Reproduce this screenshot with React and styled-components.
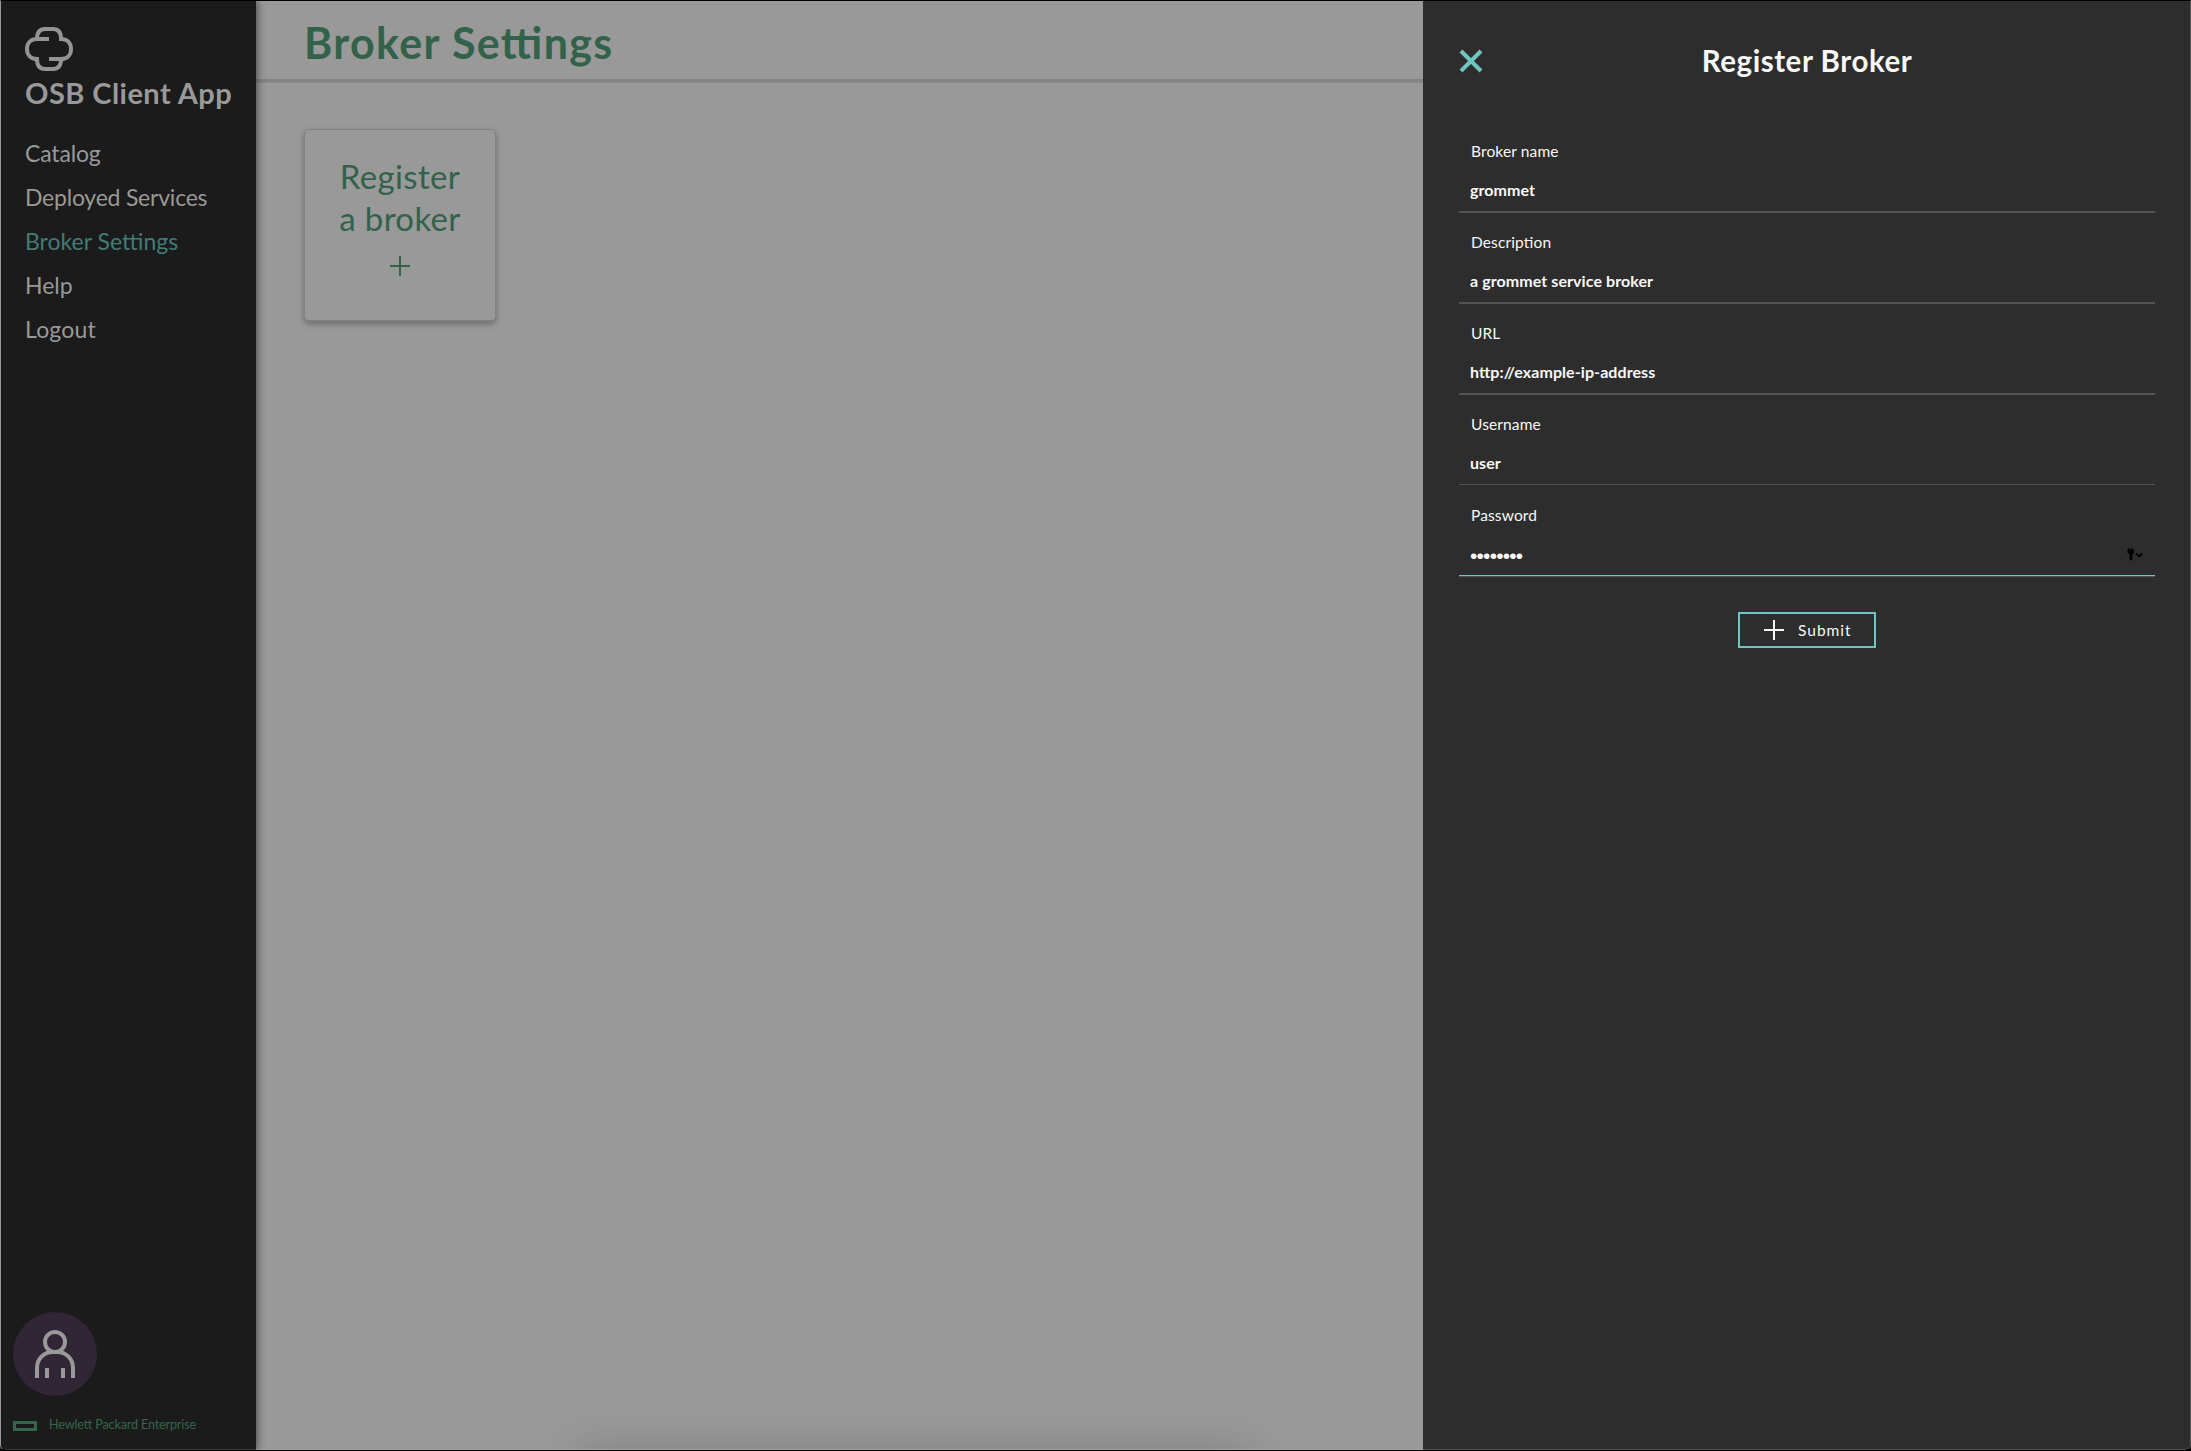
import React from "react";
import styled, { createGlobalStyle } from "styled-components";

const GlobalStyle = createGlobalStyle`
  *, *::before, *::after { box-sizing: border-box; }
  body {
    margin: 0;
    background: #000;
    font-family: Lato, "Liberation Sans", sans-serif;
    font-feature-settings: "liga" 1;
  }
`;

const Window = styled.div`
  display: flex;
  width: 2191px;
  height: 1451px;
  border-top: 1px solid #000;
  border-bottom: 1px solid #000;
  border-left: 1px solid #999;
  border-right: 1px solid #565656;
  border-radius: 0 0 6px 6px;
  background: #000;
  overflow: hidden;
`;

const Sidebar = styled.aside`
  display: flex;
  flex-direction: column;
  flex: 0 0 255px;
  padding-bottom: 13px;
  background: #1b1b1b;
  color: #999;
  box-shadow: 0 0 8px 1px rgba(0, 0, 0, 0.55);
  border-bottom: 1px solid #3c3c3c;
  border-bottom-left-radius: 5px;
  z-index: 1;
`;

const Brand = styled.div`
  display: flex;
  flex-direction: column;
  padding: 24px 0 0 24px;
`;

const BrandName = styled.div`
  font-size: 29px;
  font-weight: 700;
  line-height: 40px;
  letter-spacing: 0.45px;
  white-space: nowrap;
`;

const Nav = styled.nav`
  display: flex;
  flex-direction: column;
  flex: 1;
  padding: 18px 0 0 24px;
`;

const NavItem = styled.a`
  font-size: 23px;
  line-height: 44px;
  letter-spacing: ${(p) => p.$tracking || 0}px;
  color: ${(p) => (p.$active ? "#437b76" : "#999")};
`;

const SidebarFooter = styled.footer`
  display: flex;
  flex-direction: column;
  gap: 20px;
  padding-left: 12px;
`;

const Avatar = styled.div`
  display: flex;
  align-items: center;
  justify-content: center;
  width: 84px;
  height: 84px;
  border-radius: 50%;
  background: #312636;
`;

const Company = styled.div`
  display: flex;
  align-items: center;
  gap: 12px;
  height: 20px;
`;

const CompanyMark = styled.span`
  width: 24px;
  height: 10px;
  border: 3px solid #33664d;
`;

const CompanyName = styled.span`
  padding-bottom: 3px;
  font-size: 12.6px;
  letter-spacing: -0.15px;
  line-height: 17px;
  color: #33664d;
`;

const Main = styled.main`
  position: relative;
  display: flex;
  flex-direction: column;
  flex: 1;
  overflow: hidden;
  background: #999;
  border-bottom: 1px solid #a3a3a3;
`;

const PageHeader = styled.header`
  display: flex;
  align-items: center;
  height: 81px;
  padding: 5px 0 0 48px;
  border-bottom: 3px solid #828282;
  box-shadow: 0 1px 1px rgba(0, 0, 0, 0.08);
`;

const PageTitle = styled.h1`
  margin: 0;
  font-size: 43px;
  line-height: 52px;
  letter-spacing: 1.35px;
  color: #33624b;
`;

const CardGrid = styled.section`
  display: flex;
  padding: 47px 48px;
`;

const Card = styled.button`
  display: flex;
  flex-direction: column;
  align-items: center;
  width: 192px;
  height: 192px;
  padding: 25px 0 0;
  border: 1px solid #828282;
  border-radius: 5px;
  background: #999;
  box-shadow: 0 3px 6px rgba(0, 0, 0, 0.3);
  color: #33624b;
`;

const CardTitle = styled.span`
  margin-bottom: 17px;
  font-family: Lato, sans-serif;
  font-size: 33px;
  line-height: 42px;
  letter-spacing: 0.35px;
`;

const DockShadow = styled.div`
  position: absolute;
  left: 319px;
  top: 100%;
  width: 677px;
  height: 80px;
  border-radius: 8px;
  box-shadow: 0 0 44px rgba(0, 0, 0, 0.16);
`;

const Panel = styled.aside`
  display: flex;
  flex-direction: column;
  flex: 0 0 767px;
  padding: 40px 35px 0 36px;
  background: #2d2d2d;
  border-bottom: 1px solid #505050;
  border-bottom-right-radius: 5px;
  color: #f8f8f8;
`;

const PanelHeader = styled.header`
  display: grid;
  grid-template-columns: 24px 1fr 24px;
  align-items: center;
  height: 40px;
  margin-bottom: 58px;
`;

const PanelTitle = styled.h2`
  margin: 0;
  font-size: 29.5px;
  line-height: 40px;
  letter-spacing: 0.55px;
  text-align: center;
`;

const Form = styled.form`
  display: flex;
  flex-direction: column;
`;

const Field = styled.label`
  display: flex;
  flex-direction: column;
  height: 91px;
`;

const FieldLabel = styled.span`
  height: 24px;
  padding-left: 12px;
  font-size: 15.5px;
  line-height: 24px;
  letter-spacing: 0.13px;
`;

const FieldValue = styled.span`
  display: flex;
  justify-content: space-between;
  height: ${(p) => (p.$thin || p.$focused ? 34 : 35)}px;
  margin-top: 15px;
  padding-left: 11px;
  border-bottom: ${(p) => (p.$thin || p.$focused ? 1 : 2)}px solid
    ${(p) => (p.$focused ? "#6fc5bf" : "#535353")};
  box-shadow: ${(p) => (p.$focused ? "0 1px 0 #535353" : "none")};
  font-size: 16px;
  font-weight: 700;
  line-height: 24px;
  letter-spacing: 0.08px;
`;

const Dots = styled.span`
  font-family: "Liberation Sans", sans-serif;
  font-size: 21px;
  font-weight: 400;
  line-height: 27px;
  letter-spacing: -0.8px;
`;

const KeyIcon = styled.svg`
  width: 16px;
  height: 13px;
  margin: 6px 12px 0 0;
`;

const Submit = styled.button`
  display: flex;
  align-items: center;
  align-self: center;
  gap: 14px;
  width: 138px;
  height: 36px;
  margin-top: 18px;
  padding: 0 0 0 24px;
  border: 2px solid #6fc5bf;
  background: transparent;
  color: #f8f8f8;
  font-family: Lato, sans-serif;
  font-size: 15.5px;
  letter-spacing: 1px;
`;

const Plus = () => (
  <svg width="20" height="20" viewBox="0 0 20 20" fill="none" stroke="currentColor" strokeWidth="2">
    <path d="M10 0v20M0 10h20" />
  </svg>
);

const Logo = () => (
  <svg width="48" height="48" viewBox="0 0 24 24" fill="none" stroke="#949494" strokeWidth="2">
    <path d="M12 7H6c-3 0-5 2-5 5s2 5 5 5c0 3.500 1.500 5 4 5h4c2.500 0 4-1.500 4-5h-6M6 7c0-3.500 1.500-5 4-5h4c2.500 0 4 1.500 4 5 3 0 5 2 5 5s-2 5-5 5M17 7h1" />
  </svg>
);

const Person = () => (
  <svg width="48" height="48" viewBox="0 0 24 24" fill="none" stroke="#999" strokeWidth="2">
    <path d="M8 24v-5M16 24v-5M3 24v-5c0-4.400 3.300-8 8-8h2c4.700 0 8 3.600 8 8v5M12 11a5 5 0 1 0 0-10 5 5 0 0 0 0 10z" />
  </svg>
);

const Close = () => (
  <svg width="24" height="24" viewBox="0 0 24 24" fill="none" stroke="#6fc5bf" strokeWidth="4">
    <path d="M2 2l20 20M22 2L2 22" />
  </svg>
);

const NAV = [
  { label: "Catalog", tracking: -0.15 },
  { label: "Deployed Services", tracking: -0.22 },
  { label: "Broker Settings", active: true },
  { label: "Help" },
  { label: "Logout", tracking: 0.2 },
];

const FIELDS = [
  { label: "Broker name", value: "grommet" },
  { label: "Description", value: "a grommet service broker" },
  { label: "URL", value: "http://example-ip-address" },
  { label: "Username", value: "user", thin: true },
];

export default function App() {
  return (
    <>
      <GlobalStyle />
      <Window>
        <Sidebar>
          <Brand>
            <Logo />
            <BrandName>OSB Client App</BrandName>
          </Brand>
          <Nav>
            {NAV.map((item) => (
              <NavItem key={item.label} $active={item.active} $tracking={item.tracking}>
                {item.label}
              </NavItem>
            ))}
          </Nav>
          <SidebarFooter>
            <Avatar>
              <Person />
            </Avatar>
            <Company>
              <CompanyMark />
              <CompanyName>Hewlett Packard Enterprise</CompanyName>
            </Company>
          </SidebarFooter>
        </Sidebar>
        <Main>
          <PageHeader>
            <PageTitle>Broker Settings</PageTitle>
          </PageHeader>
          <CardGrid>
            <Card>
              <CardTitle>
                Register
                <br />a broker
              </CardTitle>
              <Plus />
            </Card>
          </CardGrid>
          <DockShadow />
        </Main>
        <Panel>
          <PanelHeader>
            <Close />
            <PanelTitle>Register Broker</PanelTitle>
          </PanelHeader>
          <Form>
            {FIELDS.map((f) => (
              <Field key={f.label}>
                <FieldLabel>{f.label}</FieldLabel>
                <FieldValue $thin={f.thin}>{f.value}</FieldValue>
              </Field>
            ))}
            <Field>
              <FieldLabel>Password</FieldLabel>
              <FieldValue $focused>
                <Dots>••••••••</Dots>
                <KeyIcon viewBox="0 0 16 13">
                  <path
                    fillRule="evenodd"
                    d="M1.500 0.500h4l1.500 1.500v3l-1.700 1.500v5l-1 1h-1.200l-.8-1 .8-1-.8-1 .5-1V6.500L.5 5V2zM3 1v1.200h1V1z"
                    fill="#000"
                  />
                  <path d="M9 5.500l3 3 3-3" fill="none" stroke="#000" strokeWidth="1.800" />
                </KeyIcon>
              </FieldValue>
            </Field>
            <Submit type="button">
              <Plus />
              Submit
            </Submit>
          </Form>
        </Panel>
      </Window>
    </>
  );
}
